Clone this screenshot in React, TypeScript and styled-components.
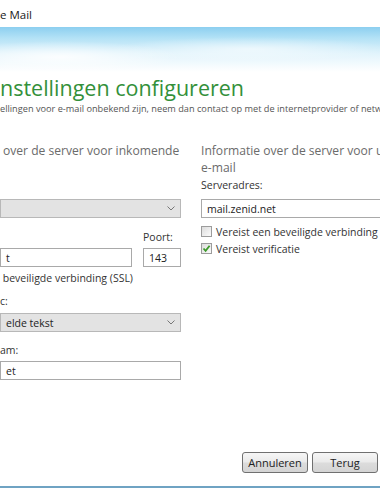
import React from 'react';
import styled, { createGlobalStyle } from 'styled-components';

const GlobalStyle = createGlobalStyle`
  html, body {
    margin: 0;
    padding: 0;
    background: #ffffff;
  }
  body {
    font-family: 'Open Sans', 'Noto Sans', 'Liberation Sans', sans-serif;
  }
`;

const Window = styled.div`
  width: 380px;
  height: 488px;
  overflow: hidden;
  display: flex;
  flex-direction: column;
  background: #ffffff;
`;

const TitleBar = styled.div`
  height: 27px;
  flex: none;
  display: flex;
  align-items: center;
  padding-top: 1px;
  font-size: 11.5px;
  color: #1a1a1a;
  white-space: nowrap;
  box-sizing: border-box;
`;

const Banner = styled.div`
  height: 45px;
  flex: none;
  background:
    radial-gradient(ellipse 120px 16px at 60px 30px, rgba(255, 255, 255, 0.85), rgba(255, 255, 255, 0)),
    radial-gradient(ellipse 140px 12px at 250px 22px, rgba(255, 255, 255, 0.6), rgba(255, 255, 255, 0)),
    linear-gradient(to bottom, #8ccff0 0%, #b4e2f6 25%, #e2f4fc 60%, #ffffff 100%);
`;

const Content = styled.div`
  flex: 1;
  display: flex;
  flex-direction: column;
  min-height: 0;
`;

const Heading = styled.h1`
  margin: 2px 0 0 0;
  font-size: 21.5px;
  line-height: 28px;
  font-weight: normal;
  color: #33903a;
  white-space: nowrap;
`;

const Intro = styled.p`
  margin: 0;
  font-size: 9.2px;
  line-height: 14px;
  color: #555;
  white-space: nowrap;
`;

const Columns = styled.div`
  display: flex;
  gap: 20px;
  margin-top: 26px;
`;

const Column = styled.div<{ $width: number }>`
  width: ${({ $width }) => $width}px;
  flex: none;
  display: flex;
  flex-direction: column;
`;

const ColumnHeading = styled.div<{ $indent?: number }>`
  font-size: 12.1px;
  line-height: 17px;
  color: #6b6b6b;
  padding-left: ${({ $indent }) => $indent ?? 0}px;
  white-space: pre;
`;

const Label = styled.div<{ $top?: number }>`
  font-size: 10.5px;
  line-height: 16px;
  height: 16px;
  margin-top: ${({ $top }) => $top ?? 0}px;
  color: #333;
  white-space: nowrap;
`;

const Field = styled.div<{ $top?: number; $gray?: boolean }>`
  height: 19px;
  box-sizing: border-box;
  margin-top: ${({ $top }) => $top ?? 0}px;
  border: 1px solid ${({ $gray }) => ($gray ? '#b8b8b8' : '#a9a9a9')};
  background: ${({ $gray }) => ($gray ? '#e3e3e3' : '#ffffff')};
  display: flex;
  align-items: center;
  padding: 0 5px;
  font-size: 10.5px;
  color: #222;
  white-space: nowrap;
`;

const FieldText = styled.span`
  flex: 1;
`;

const Chevron = styled.svg`
  width: 8px;
  height: 5px;
  flex: none;
`;

const PortRow = styled.div`
  display: flex;
  gap: 11px;
  align-items: flex-end;
  margin-top: 11px;
`;

const PortGroup = styled.div<{ $width: number }>`
  width: ${({ $width }) => $width}px;
  flex: none;
  display: flex;
  flex-direction: column;
  gap: 3px;
`;

const CheckRow = styled.div<{ $top?: number }>`
  display: flex;
  align-items: center;
  gap: 4px;
  height: 17px;
  margin-top: ${({ $top }) => $top ?? 0}px;
  font-size: 10.5px;
  color: #333;
  white-space: nowrap;
`;

const Box = styled.span`
  width: 11px;
  height: 11px;
  box-sizing: border-box;
  border: 1px solid #9c9c9c;
  background: linear-gradient(135deg, #dcdcdc, #fbfbfb);
  display: flex;
  align-items: center;
  justify-content: center;
  flex: none;
`;

const Footer = styled.div`
  margin-top: auto;
  display: flex;
  justify-content: flex-end;
  gap: 4px;
  padding: 0 2px 13px 0;
`;

const Button = styled.button`
  width: 66px;
  height: 21px;
  border: 1px solid #707070;
  border-radius: 3px;
  background: linear-gradient(to bottom, #f6f6f6 0%, #eaeaea 48%, #dcdcdc 52%, #d4d4d4 100%);
  font-family: inherit;
  font-size: 11px;
  color: #222;
  padding: 0;
`;

const BottomLine = styled.div`
  height: 2px;
  flex: none;
  background: #6fa3c3;
`;

const SelectChevron = () => (
  <Chevron viewBox="0 0 8 5">
    <path d="M0.5 0.5 L4 4 L7.5 0.5" fill="none" stroke="#777" strokeWidth="1" />
  </Chevron>
);

const Check = () => (
  <svg width="9" height="9" viewBox="0 0 9 9">
    <path d="M1.5 4.5 L3.6 6.8 L7.6 1.8" fill="none" stroke="#3d9a2b" strokeWidth="1.8" />
  </svg>
);

export default function App() {
  return (
    <>
      <GlobalStyle />
      <Window>
        <TitleBar>e Mail</TitleBar>
        <Banner />
        <Content>
          <Heading>nstellingen configureren</Heading>
          <Intro>
            ellingen voor e-mail onbekend zijn, neem dan contact op met de internetprovider of netwerkbeheerder.
          </Intro>
          <Columns>
            <Column $width={181}>
              <ColumnHeading $indent={3}>over de server voor inkomende</ColumnHeading>
              <ColumnHeading> </ColumnHeading>
              <Label $top={1} />
              <Field $top={6} $gray>
                <FieldText />
                <SelectChevron />
              </Field>
              <PortRow>
                <PortGroup $width={132}>
                  <Label />
                  <Field>t</Field>
                </PortGroup>
                <PortGroup $width={38}>
                  <Label>Poort:</Label>
                  <Field>143</Field>
                </PortGroup>
              </PortRow>
              <Label $top={3}>&nbsp;beveiligde verbinding (SSL)</Label>
              <Label $top={7}>c:</Label>
              <Field $top={4} $gray>
                <FieldText>elde tekst</FieldText>
                <SelectChevron />
              </Field>
              <Label $top={10}>am:</Label>
              <Field $top={3}>et</Field>
            </Column>
            <Column $width={200}>
              <ColumnHeading>Informatie over de server voor uitgaande</ColumnHeading>
              <ColumnHeading>e-mail</ColumnHeading>
              <Label $top={1}>Serveradres:</Label>
              <Field $top={6}>mail.zenid.net</Field>
              <CheckRow $top={5}>
                <Box />
                Vereist een beveiligde verbinding (SSL)
              </CheckRow>
              <CheckRow>
                <Box>
                  <Check />
                </Box>
                Vereist verificatie
              </CheckRow>
            </Column>
          </Columns>
          <Footer>
            <Button>Annuleren</Button>
            <Button>Terug</Button>
          </Footer>
        </Content>
        <BottomLine />
      </Window>
    </>
  );
}
